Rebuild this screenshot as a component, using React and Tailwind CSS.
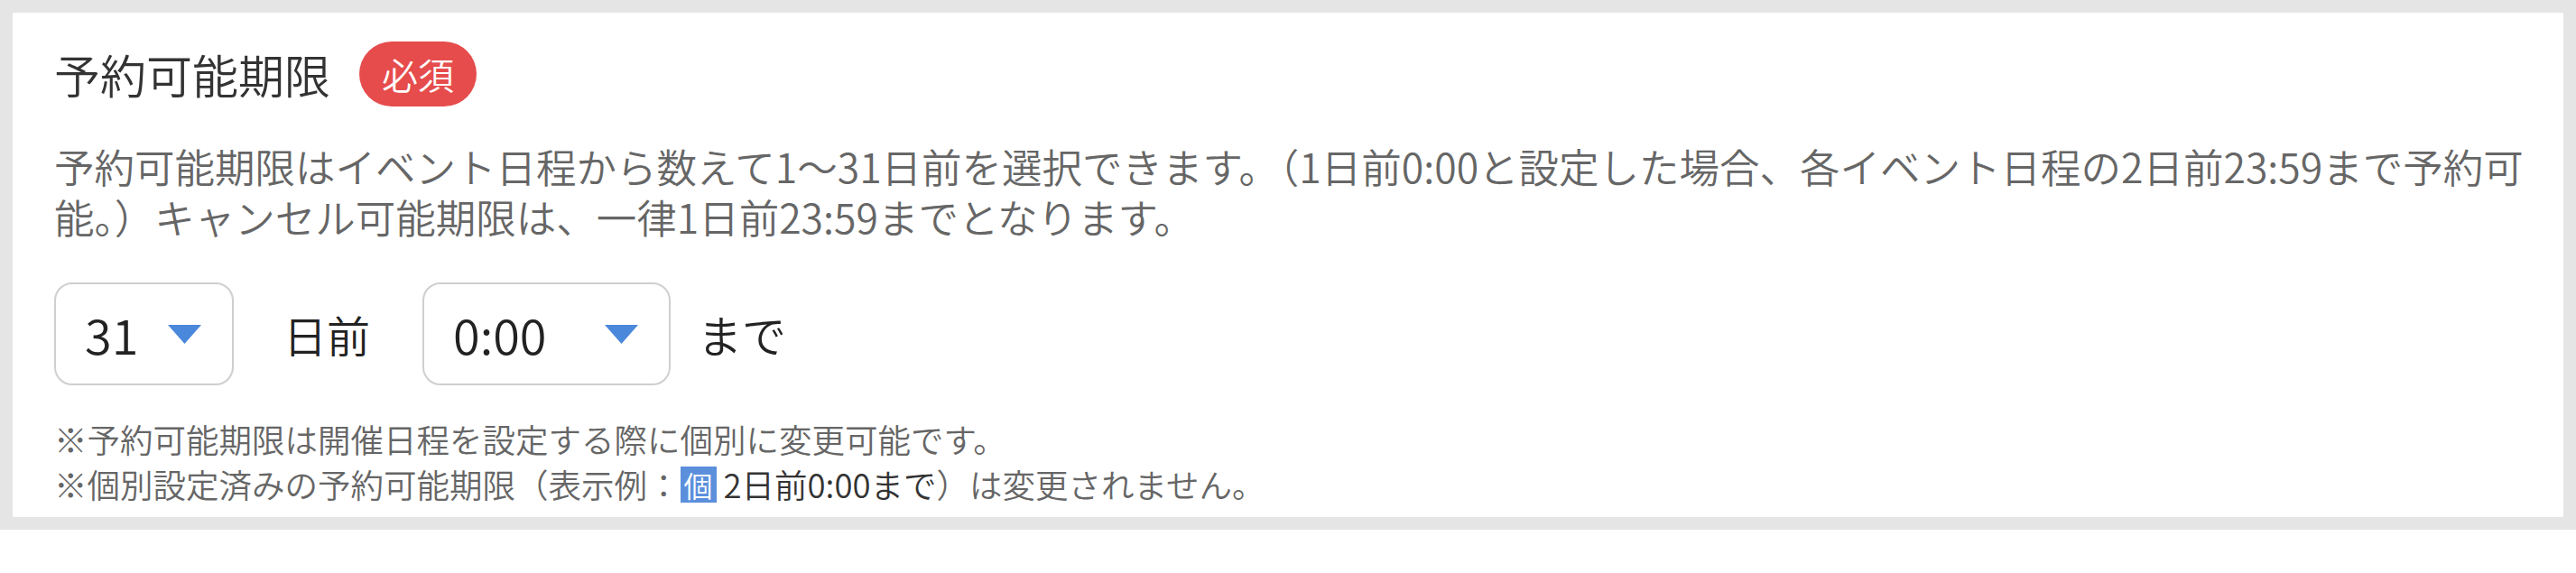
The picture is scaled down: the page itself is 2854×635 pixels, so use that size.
import { useState } from 'react'

const FONT = { fontFamily: '"Noto Sans CJK JP", "Noto Sans", sans-serif' }

function Caret() {
  return (
    <svg width="37" height="21" viewBox="0 0 37 21" className="shrink-0">
      <path d="M0 0 H37 L18.5 21 Z" fill="#4a88dc" />
    </svg>
  )
}

function SelectBox({ value, width }) {
  return (
    <div
      className={`flex h-[114px] items-center justify-between rounded-[20px] border-2 border-[#cfcfcf] bg-white pl-[32px] pr-[34px] ${width}`}
    >
      <span className="text-[54px] leading-none text-[#222]">{value}</span>
      <Caret />
    </div>
  )
}

export default function App() {
  const [days] = useState('31')
  const [time] = useState('0:00')

  return (
    <div className="min-h-[635px] bg-white [font-weight:350]" style={FONT}>
      <div className="bg-[#e5e5e5] p-[14px]">
        <div className="bg-white pb-[11px] pl-[46px] pr-[30px] pt-[32px]">
          {/* heading */}
          <div className="flex items-center gap-8">
            <h2 className="text-[51px] leading-[72px] text-[#333]">予約可能期限</h2>
            <span className="flex h-[72px] items-center rounded-full bg-[#e64c4c] px-[25px] text-[40px] text-white">
              必須
            </span>
          </div>

          <p className="mt-[38px] break-all text-[44.5px] leading-[56px] text-[#666]">
            予約可能期限はイベント日程から数えて1〜31日前を選択できます。（1日前0:00と設定した場合、各イベント日程の2日前23:59まで予約可能。）キャンセル可能期限は、一律1日前23:59までとなります。
          </p>

          {/* selects */}
          <div className="mt-[45px] flex items-center">
            <SelectBox value={days} width="w-[199px]" />
            <span className="ml-[55px] text-[48px] text-[#222]">日前</span>
            <div className="ml-[58px]">
              <SelectBox value={time} width="w-[275px]" />
            </div>
            <span className="ml-[30px] text-[49px] text-[#222]">まで</span>
          </div>

          {/* notes */}
          <div className="mt-[35px] text-[36.5px] leading-[50px] text-[#666]">
            <p>※予約可能期限は開催日程を設定する際に個別に変更可能です。</p>
            <p className="flex items-center">
              <span>※個別設定済みの予約可能期限（表示例：</span>
              <span className="flex h-[40px] w-[40px] items-center justify-center bg-[#5b8fdc] text-[32px] leading-none text-white">
                個
              </span>
              <span className="ml-[8px] text-[#333]">2日前0:00まで</span>
              <span>）は変更されません。</span>
            </p>
          </div>
        </div>
      </div>
    </div>
  )
}
